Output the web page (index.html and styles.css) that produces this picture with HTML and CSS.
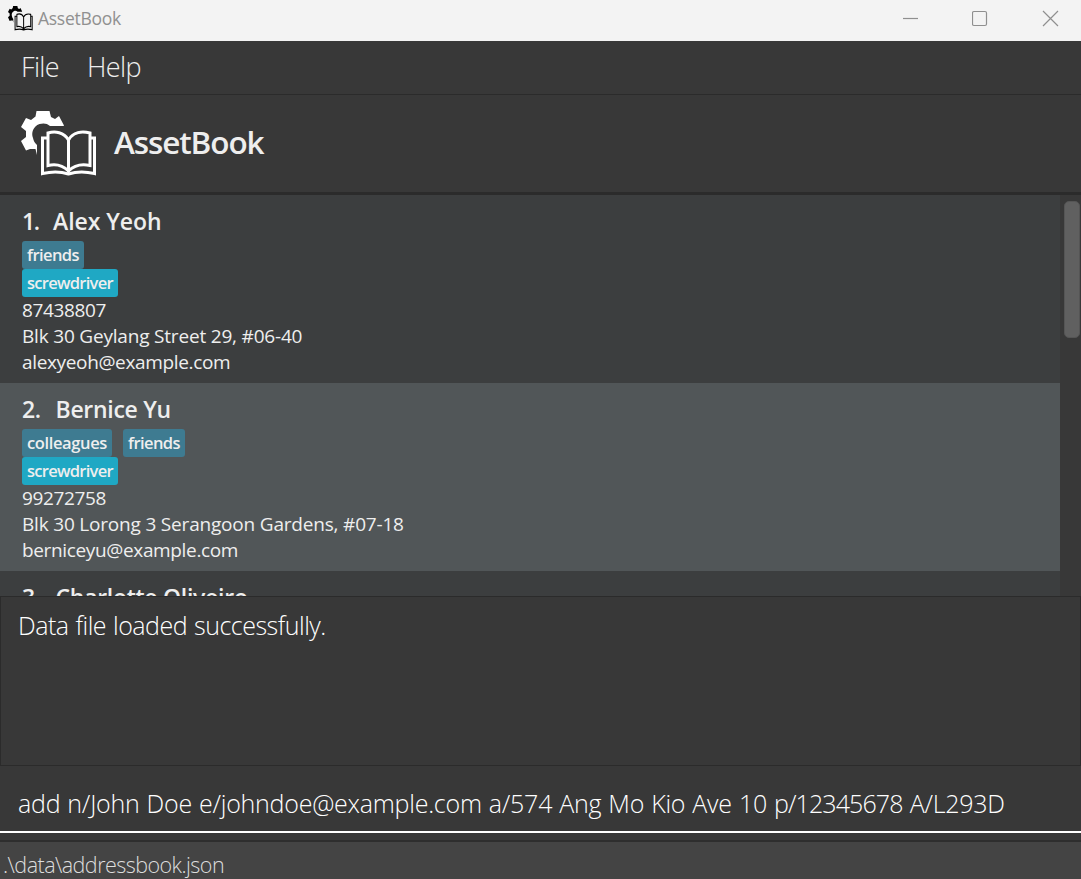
FILE: index.html
```html
<!DOCTYPE html>
<html lang="en">
<head>
<meta charset="utf-8">
<title>AssetBook</title>
<link rel="stylesheet" href="styles.css">
</head>
<body>
<div class="window">
  <header class="titlebar">
    <svg class="app-icon" viewBox="0 0 76 66" preserveAspectRatio="none"><use href="#logo"/></svg>
    <span class="app-name">AssetBook</span>
    <div class="controls">
      <svg viewBox="0 0 17 17"><path d="M1 8.5H16"/></svg>
      <svg viewBox="0 0 17 17"><rect x="0.5" y="1.5" width="14" height="14" rx="1.5"/></svg>
      <svg viewBox="0 0 17 17"><path d="M1 1L16 16M16 1L1 16"/></svg>
    </div>
  </header>
  <nav class="menu"><span>File</span><span>Help</span></nav>
  <section class="banner">
    <svg class="logo" viewBox="0 0 76 66">
      <g id="logo">
        <path class="gear" d="M14.500 5.500L15.500 0H28.500L30 6L34 8L38 5L43 14.500L42.500 15H29C26 12 22 12 18.500 13C12 15.500 10 22 12 27C12.500 30 14 32 16 34V44L14.500 38L9 38L5 39.500L0 30L5 26V20L0 16L5 7L10 9Z"/>
        <path class="book" d="M26.500 27H21.500V62.500C30 60.500 40 60.500 47.500 63C55 60.500 65 60.500 73.500 62.500V27H69M47.500 29C43 21 34 20 27 22V54.500C35 52.500 42 54.500 47.500 60C53 54.500 60 52.500 69 54.500V22C61 20 52 21 47.500 29ZV61"/>
      </g>
    </svg>
    <h1>AssetBook</h1>
  </section>
  <main class="people">
    <div class="list">
      <article class="person">
        <h2><span class="index narrow">1.</span><span class="name-short">Alex Yeoh</span></h2>
        <div class="tags"><span class="tag">friends</span></div>
        <div class="tags"><span class="tag asset">screwdriver</span></div>
        <p class="phone">87438807</p>
        <p class="address">Blk 30 Geylang Street 29, #06-40</p>
        <p class="email">alexyeoh@example.com</p>
      </article>
      <article class="person alt">
        <h2><span class="index">2.</span><span>Bernice Yu</span></h2>
        <div class="tags"><span class="tag wide">colleagues</span><span class="tag">friends</span></div>
        <div class="tags"><span class="tag asset">screwdriver</span></div>
        <p class="phone">99272758</p>
        <p class="address">Blk 30 Lorong 3 Serangoon Gardens, #07-18</p>
        <p class="email">berniceyu@example.com</p>
      </article>
      <article class="person">
        <h2><span class="index">3.</span><span>Charlotte Oliveiro</span></h2>
      </article>
    </div>
    <div class="scroll"><div class="thumb"></div></div>
  </main>
  <section class="result">Data file loaded successfully.</section>
  <section class="command"><div class="field">add n/John Doe e/johndoe@example.com a/574 Ang Mo Kio Ave 10 <span class="digits">p/12345678</span> A/L293D</div></section>
  <footer class="status">.\data\addressbook.json</footer>
</div>
</body>
</html>
```
FILE: styles.css
```css
* { box-sizing: border-box; }
body { margin: 0; background: #383838; font-family: "Open Sans", "Noto Sans", sans-serif; color: #eee; }
.window { width: 1081px; height: 879px; display: flex; flex-direction: column; overflow: hidden; white-space: nowrap; }
.titlebar { height: 41px; flex: none; background: #f3f3f3; display: flex; align-items: center; padding: 0 22px 4px 8px; }
.app-icon { width: 25px; height: 25px; margin-right: 5px; overflow: visible; color: #000; }
.app-name { font-size: 17.500px; line-height: 24px; letter-spacing: -0.270px; color: #909090; margin-top: -1px; }
.controls { margin-left: auto; display: flex; gap: 53px; }
.controls svg { width: 17px; height: 17px; fill: none; stroke: #8f8f8f; stroke-width: 1.200; }
.menu { height: 54px; flex: none; display: flex; gap: 28px; padding: 0 21px; font-size: 27px; letter-spacing: -0.650px; font-weight: 300; line-height: 51px; border-bottom: 1px solid #2b2b2b; }
.banner { height: 100px; flex: none; display: flex; align-items: flex-start; padding: 16px 21px 0; border-bottom: 3px solid #2b2b2b; }
.logo { width: 76px; height: 66px; overflow: visible; color: #fff; }
.gear { fill: currentColor; }
.book { fill: none; stroke: currentColor; stroke-width: 3; }
h1 { margin: 0 0 0 17px; font-size: 31.500px; letter-spacing: -1.100px; line-height: 62px; font-weight: 600; }
.people { height: 401px; flex: none; display: flex; overflow: hidden; }
.list { width: 1060px; }
.person { height: 188px; background: #3c3e3f; padding: 11px 22px 0; }
.alt { background: #515658; }
h2 { margin: 0 0 5px; height: 30px; line-height: 30px; font-size: 23px; letter-spacing: -0.280px; font-weight: 600; display: flex; }
.index { width: 33.500px; }
.index.narrow { width: 31px; letter-spacing: -1.500px; }
.name-short { letter-spacing: -0.050px; }
.tags { display: flex; gap: 11px; height: 28px; }
.tag { background: #3e7b91; border-radius: 3px; padding: 0 5px; line-height: 27px; font-size: 16.500px; letter-spacing: -0.570px; font-weight: 600; }
.wide { letter-spacing: -0.370px; }
.asset { background: #1fa8c4; letter-spacing: -0.710px; }
p { margin: 0; height: 26px; line-height: 26px; font-size: 19px; }
.phone, .email { letter-spacing: -0.350px; }
.address { letter-spacing: -0.190px; }
.scroll { flex: 1; background: #383838; padding: 6px 1px 0 4px; }
.thumb { height: 137px; background: #606060; border: 1px solid #555; border-radius: 5px; }
.result { height: 170px; flex: none; border: 1px solid #2b2b2b; padding: 11px 17px; font-size: 25px; letter-spacing: -0.500px; word-spacing: 1px; line-height: 34px; font-weight: 300; color: #fff; }
.command { height: 76px; flex: none; padding-top: 7px; border-bottom: 2px solid #2e2e2e; }
.field { height: 60px; border-bottom: 2px solid #fff; padding: 0 18px; font-size: 25px; letter-spacing: -0.240px; word-spacing: 0.800px; line-height: 60px; font-weight: 300; color: #fff; }
.digits { letter-spacing: -0.900px; }
.status { flex: 1; background: #444; padding: 0 3px; font-size: 21.500px; letter-spacing: -0.540px; line-height: 45px; font-weight: 300; color: #ddd; }
```
